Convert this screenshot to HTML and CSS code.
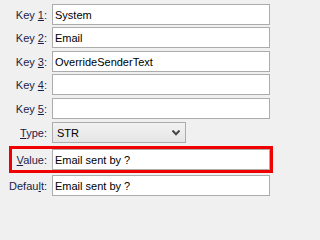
FILE: index.html
```html
<!DOCTYPE html>
<html>
<head>
<meta charset="utf-8">
<link rel="stylesheet" href="styles.css">
</head>
<body>
<div class="form">
  <div class="row"><label class="lbl">Key <u>1</u>:</label><input class="field" type="text" value="System"></div>
  <div class="row gap2"><label class="lbl">Key <u>2</u>:</label><input class="field" type="text" value="Email"></div>
  <div class="row gap3"><label class="lbl">Key <u>3</u>:</label><input class="field" type="text" value="OverrideSenderText"></div>
  <div class="row gap2"><label class="lbl">Key <u>4</u>:</label><input class="field" type="text" value=""></div>
  <div class="row gap3"><label class="lbl">Key <u>5</u>:</label><input class="field" type="text" value=""></div>
  <div class="row gap3"><label class="lbl"><u>T</u>ype:</label>
    <div class="select"><span class="sel-text">STR</span>
      <svg class="chev" width="8" height="6" viewBox="0 0 8 6"><path d="M0.5 0.5 L4 4.2 L7.5 0.5" fill="none" stroke="#454545" stroke-width="2"/></svg>
    </div>
  </div>
  <div class="row hl gap3"><label class="lbl"><u>V</u>alue:</label><input class="field" type="text" value="Email sent by ?"></div>
  <div class="row gap2"><label class="lbl">Defau<u>l</u>t:</label><input class="field" type="text" value="Email sent by ?"></div>
</div>
</body>
</html>
```
FILE: styles.css
```css
html, body {
  margin: 0;
  background: #f0f0f0;
}
body {
  font: 11px "Liberation Sans", Arial, sans-serif;
}
.form {
  box-sizing: border-box;
  width: 273px;
  height: 200px;
  display: flex;
  flex-direction: column;
  padding: 4px 3px 0 0;
}
.row {
  display: grid;
  grid-template-columns: 47px 1fr;
  column-gap: 5px;
  align-items: center;
  height: 21px;
}
.gap2 { margin-top: 2px; }
.gap3 { margin-top: 3px; }
.lbl {
  text-align: right;
  color: #1c1c48;
  white-space: nowrap;
}
.lbl u { text-decoration-thickness: 1px; text-underline-offset: 1px; }
.field {
  box-sizing: border-box;
  height: 21px;
  width: 100%;
  margin: 0;
  border: 1px solid #acacac;
  background: #fff;
  padding: 0 2px;
  font: 11px "Liberation Sans", Arial, sans-serif;
  color: #000;
  outline: none;
}
.select {
  box-sizing: border-box;
  width: 134px;
  height: 21px;
  border: 1px solid #acacac;
  background: linear-gradient(#f2f2f2, #e5e5e5);
  display: flex;
  align-items: center;
  justify-content: space-between;
  padding: 0 5px 0 4px;
  color: #000;
}
.chev { display: block; margin-top: 1px; }
.row.hl {
  box-sizing: border-box;
  height: 27px;
  margin-left: 9px;
  margin-right: -3px;
  border: 3px solid #f00000;
  grid-template-columns: 35px 1fr;
}
```
